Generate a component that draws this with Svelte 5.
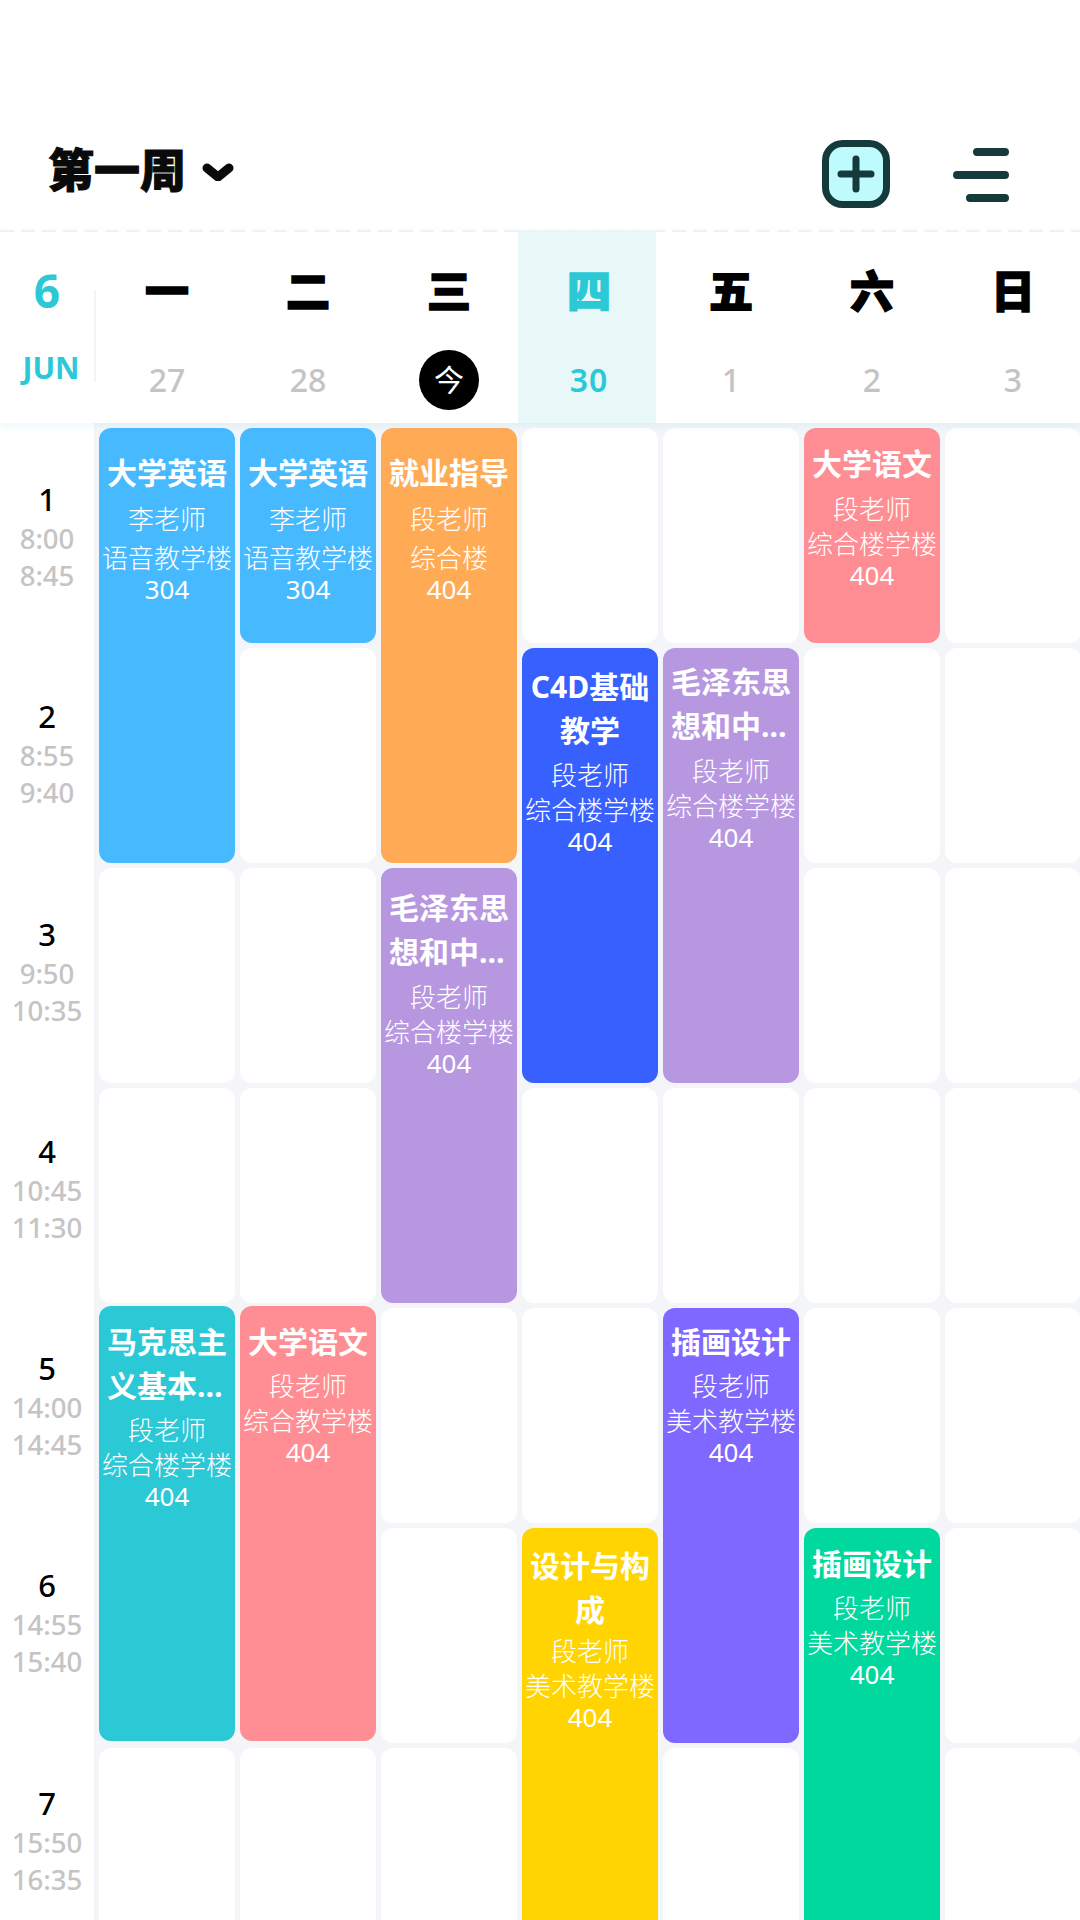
<script>
	const days = [
		{ label: '一', date: '27' },
		{ label: '二', date: '28' },
		{ label: '三', date: '今', today: true },
		{ label: '四', date: '30', active: true },
		{ label: '五', date: '1' },
		{ label: '六', date: '2' },
		{ label: '日', date: '3' }
	];

	const times = [
		['1', '8:00', '8:45'],
		['2', '8:55', '9:40'],
		['3', '9:50', '10:35'],
		['4', '10:45', '11:30'],
		['5', '14:00', '14:45'],
		['6', '14:55', '15:40'],
		['7', '15:50', '16:35']
	];

	const MAO = '毛泽东思想和中国特色社会主义理论体系概论';

	// pad = card top to title, gap = title to teacher, drop = teacher to building, up = whole card shift
	const courses = [
		{ col: 1, row: 1, span: 2, title: '大学英语', who: '李老师', place: '语音教学楼', room: '304', color: '#47b9ff', pad: 23, gap: 6, drop: 5 },
		{ col: 2, row: 1, span: 1, title: '大学英语', who: '李老师', place: '语音教学楼', room: '304', color: '#47b9ff', pad: 23, gap: 6, drop: 5 },
		{ col: 3, row: 1, span: 2, title: '就业指导', who: '段老师', place: '综合楼', room: '404', color: '#ffab56', pad: 23, gap: 6, drop: 5 },
		{ col: 6, row: 1, span: 1, title: '大学语文', who: '段老师', place: '综合楼学楼', room: '404', color: '#ff8d94', pad: 14, gap: 5, drop: 1 },
		{ col: 4, row: 2, span: 2, title: 'C4D基础教学', who: '段老师', place: '综合楼学楼', room: '404', color: '#3860ff', pad: 17, gap: 4, drop: 1 },
		{ col: 5, row: 2, span: 2, title: MAO, who: '段老师', place: '综合楼学楼', room: '404', color: '#b797e0', pad: 12, gap: 5, drop: 1 },
		{ col: 3, row: 3, span: 2, title: MAO, who: '段老师', place: '综合楼学楼', room: '404', color: '#b797e0', pad: 18, gap: 5, drop: 1 },
		{ col: 1, row: 5, span: 2, title: '马克思主义基本原理', who: '段老师', place: '综合楼学楼', room: '404', color: '#2bc8d6', pad: 14, gap: 4, drop: 1, up: 2 },
		{ col: 2, row: 5, span: 2, title: '大学语文', who: '段老师', place: '综合教学楼', room: '404', color: '#ff8d94', pad: 14, gap: 4, drop: 1, up: 2 },
		{ col: 5, row: 5, span: 2, title: '插画设计', who: '段老师', place: '美术教学楼', room: '404', color: '#7f68ff', pad: 12, gap: 4, drop: 1 },
		{ col: 4, row: 6, span: 2, title: '设计与构成', who: '段老师', place: '美术教学楼', room: '404', color: '#ffd400', pad: 16, gap: 1, drop: 1 },
		{ col: 6, row: 6, span: 2, title: '插画设计', who: '段老师', place: '美术教学楼', room: '404', color: '#00d89e', pad: 14, gap: 4, drop: 1 }
	];

	const taken = new Set();
	for (const c of courses) {
		for (let r = c.row; r < c.row + c.span; r++) taken.add(c.col + '-' + r);
	}

	const empties = [];
	for (let col = 1; col <= 7; col++) {
		for (let row = 1; row <= 7; row++) {
			if (!taken.has(col + '-' + row)) empties.push({ col, row });
		}
	}
</script>

<div class="page">
	<header class="top">
		<div class="week-pick">
			<span class="week-name">第一周</span>
			<svg class="chevron" width="32" height="18" viewBox="0 0 32 18">
				<polyline points="5,5 16,14 27,5" />
			</svg>
		</div>
		<div class="actions">
			<svg width="68" height="68" viewBox="0 0 68 68">
				<rect class="plus-box" x="3.5" y="3.5" width="61" height="61" rx="17" />
				<path class="plus" d="M34 19V49M19 34H49" />
			</svg>
			<svg class="menu" width="56" height="54" viewBox="0 0 56 54">
				<path class="lines" d="M24 4H52M4 27H52M17 50H52" />
			</svg>
		</div>
	</header>

	<section class="week">
		<div class="month">
			<span class="month-num">6</span>
			<span class="month-name">JUN</span>
		</div>
		{#each days as d}
			<div class="day" class:active={d.active}>
				<span class="day-label">{d.label}</span>
				<span class="date" class:today={d.today}>{d.date}</span>
			</div>
		{/each}
	</section>

	<section class="table">
		<div class="times">
			{#each times as t}
				<div class="time">
					<span class="no">{t[0]}</span>
					<span class="clock">{t[1]}</span>
					<span class="clock">{t[2]}</span>
				</div>
			{/each}
		</div>
		<div class="grid">
			{#each empties as e}
				<div class="cell" style="grid-column:{e.col};grid-row:{e.row}"></div>
			{/each}
			{#each courses as c}
				<div
					class="card"
					style="grid-column:{c.col};grid-row:{c.row} / span {c.span};background:{c.color};padding-top:{c.pad}px;margin:{-(c.up || 0)}px 0 {c.up || 0}px"
				>
					<div class="title">{c.title}</div>
					<div class="who" style="margin-top:{c.gap}px">{c.who}</div>
					<div class="place" style="margin-top:{c.drop}px">{c.place}</div>
					<div class="place room">{c.room}</div>
				</div>
			{/each}
		</div>
	</section>
</div>

<style>
	:global(body) {
		margin: 0;
		background: #f3f5f8;
	}

	.page {
		width: 1080px;
		height: 1920px;
		overflow: hidden;
		font-family: 'Noto Sans', 'Noto Sans CJK SC', sans-serif;
		background: #f3f5f8;
	}

	.top {
		height: 230px;
		box-sizing: border-box;
		padding: 140px 71px 0 48px;
		display: flex;
		justify-content: space-between;
		align-items: flex-start;
		background: #fff;
	}

	.week-pick {
		display: flex;
		align-items: center;
		gap: 16px;
		height: 64px;
	}

	.week-name {
		font-family: 'Noto Sans CJK SC', sans-serif;
		font-size: 46px;
		line-height: 64px;
		font-weight: 900;
		color: #0a0a0a;
		margin-top: -10px;
		-webkit-text-stroke: 1px #0a0a0a;
	}

	.chevron polyline {
		fill: none;
		stroke: #0a0a0a;
		stroke-width: 9;
		stroke-linecap: round;
		stroke-linejoin: round;
	}

	.actions {
		display: flex;
		align-items: flex-start;
		gap: 63px;
	}

	.plus-box {
		fill: #bffafd;
		stroke: #143a3c;
		stroke-width: 7;
	}

	.plus,
	.lines {
		fill: none;
		stroke: #143a3c;
		stroke-linecap: round;
	}

	.plus {
		stroke-width: 7;
	}

	.lines {
		stroke-width: 8;
	}

	.menu {
		margin-top: 8px;
	}

	.week {
		position: relative;
		z-index: 1;
		height: 193px;
		display: grid;
		grid-template-columns: 94px repeat(7, 136px);
		column-gap: 5px;
		background: #fff;
		box-shadow: 0 3px 8px rgba(43, 200, 214, 0.1);
	}

	.week::before {
		content: '';
		position: absolute;
		z-index: 1;
		left: 0;
		right: 0;
		top: 0;
		height: 2px;
		background: repeating-linear-gradient(90deg, #eef2f5 0 14px, transparent 14px 21px);
	}

	.month {
		position: relative;
		display: flex;
		flex-direction: column;
		align-items: center;
		color: #2bc8d6;
		font-family: 'Open Sans', sans-serif;
		font-weight: 700;
	}

	.month::after {
		content: '';
		position: absolute;
		right: -2px;
		top: 60px;
		height: 92px;
		width: 2px;
		background: #f1f3f5;
	}

	.month-num {
		margin-top: 29px;
		font-size: 46px;
		line-height: 62px;
	}

	.month-name {
		margin-top: 27px;
		margin-left: 8px;
		font-size: 30px;
		line-height: 40px;
		font-weight: 700;
	}

	.day {
		display: flex;
		flex-direction: column;
		align-items: center;
		padding-top: 37px;
	}

	.day.active {
		margin: 0 2px 0 -4px;
		padding-left: 4px;
		background: #e8f8f9;
	}

	.day-label {
		font-family: 'Noto Sans CJK SC', sans-serif;
		font-size: 44px;
		line-height: 44px;
		font-weight: 900;
		color: #000;
		-webkit-text-stroke: 1.5px #000;
	}

	.date {
		width: 60px;
		height: 60px;
		margin-top: 39px;
		text-align: center;
		font-size: 32px;
		line-height: 60px;
		font-weight: 500;
		color: #c4c4c4;
	}

	.date.today {
		border-radius: 50%;
		background: #000;
		color: #fff;
		font-size: 30px;
		font-weight: 400;
	}

	.day.active .day-label,
	.day.active .date {
		color: #2bc8d6;
		-webkit-text-stroke-color: #2bc8d6;
		font-weight: 900;
	}

	.day.active .date {
		font-weight: 600;
		letter-spacing: 1px;
	}

	.table {
		display: flex;
	}

	.times {
		width: 94px;
		box-sizing: border-box;
		height: 1497px;
		background: #fff;
		padding-top: 55px;
		flex: none;
	}

	.time {
		height: 217.3px;
		display: flex;
		flex-direction: column;
		align-items: center;
	}

	.no {
		font-size: 31px;
		line-height: 42px;
		font-weight: 500;
		color: #000;
	}

	.clock {
		font-size: 27.5px;
		line-height: 37px;
		font-weight: 500;
		color: #c4c4c4;
	}

	.grid {
		flex: none;
		display: grid;
		grid-template-columns: repeat(7, 136px);
		grid-auto-rows: 215px;
		gap: 5px;
		padding: 5px 0 0 5px;
	}

	.cell {
		background: #fff;
		border-radius: 12px;
	}

	.card {
		border-radius: 12px;
		color: #fff;
		text-align: center;
		overflow: hidden;
	}

	.title {
		font-size: 30px;
		line-height: 44px;
		font-weight: 700;
		padding: 0 4px;
		display: -webkit-box;
		-webkit-box-orient: vertical;
		-webkit-line-clamp: 2;
		overflow: hidden;
	}

	.who {
		font-size: 26px;
		line-height: 37px;
		font-weight: 300;
	}

	.place {
		font-size: 26px;
		line-height: 31px;
		font-weight: 300;
	}

	.room {
		font-weight: 400;
	}
</style>
